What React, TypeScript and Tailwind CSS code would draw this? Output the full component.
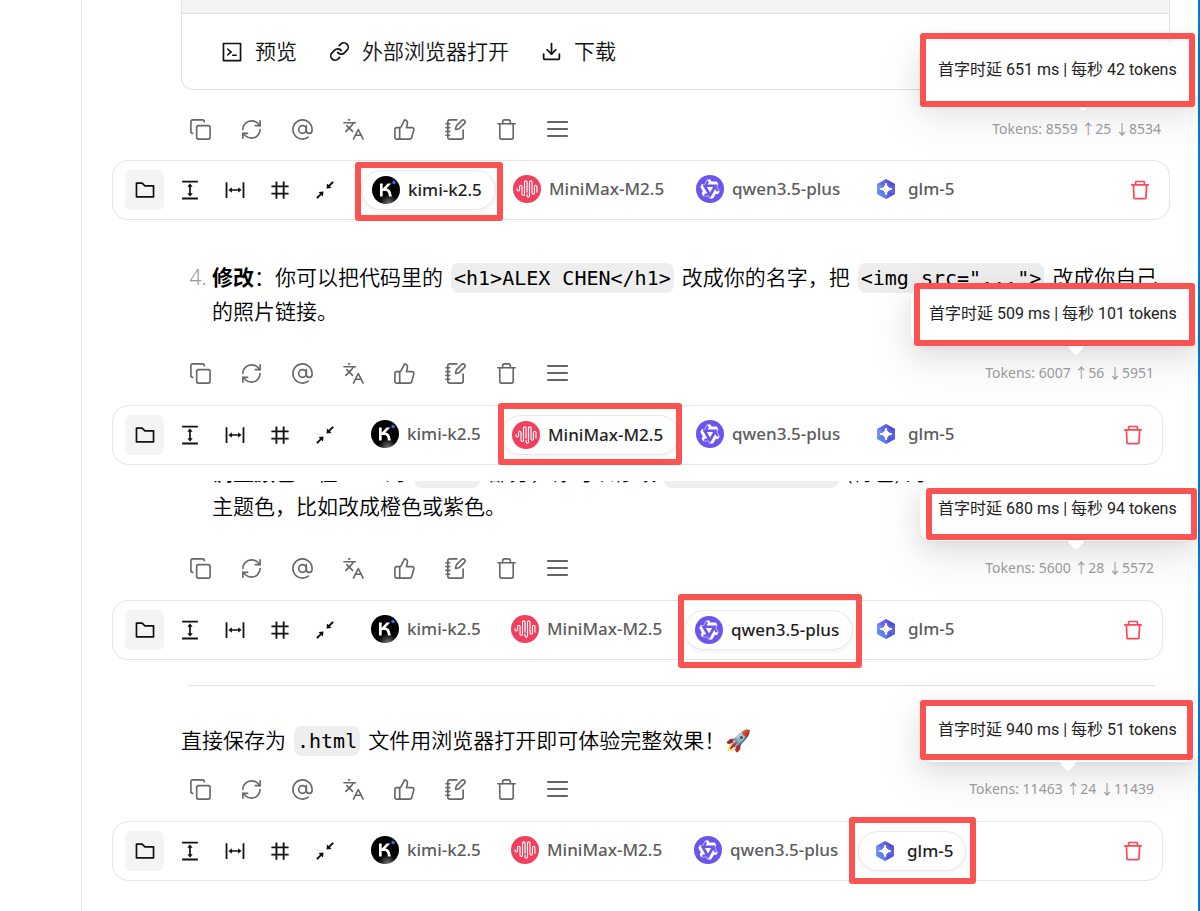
import type { ReactNode } from "react";
import { AtSign, Copy, Download, Languages, Link, NotebookPen, RefreshCw, ThumbsUp, Trash } from "lucide-react";
import {
  AiOutlineCode,
  AiOutlineColumnHeight,
  AiOutlineColumnWidth,
  AiOutlineDelete,
  AiOutlineFolder,
  AiOutlineNumber,
  AiOutlineShrink,
} from "react-icons/ai";

type ModelId = "kimi" | "minimax" | "qwen" | "glm";

function KimiLogo() {
  return (
    <svg viewBox="0 0 28 28" className="size-7 shrink-0" aria-hidden="true">
      <defs>
        <radialGradient id="kimi-glow" cx="0.6" cy="1" r="0.35">
          <stop offset="0" stopColor="#777" />
          <stop offset="1" stopColor="#000" />
        </radialGradient>
      </defs>
      <circle cx="14" cy="14" r="14" fill="url(#kimi-glow)" />
      <path d="M8 7.5h2.7v5.3l4.8-5.3h3.7l-4.7 5c3.1.5 4.500 2.200 5.300 8h-2.800c-.5-4.300-1.500-5.600-3.700-5.600h-2.600v5.600H8z" fill="#fff" />
      <circle cx="22" cy="6.5" r="1.7" fill="#1e78ff" />
    </svg>
  );
}

function MiniMaxLogo() {
  return (
    <svg viewBox="0 0 28 28" className="size-7 shrink-0" aria-hidden="true">
      <circle cx="14" cy="14" r="14" fill="#f23f5d" />
      <g transform="translate(3.5 3.5) scale(0.875)" fill="#fff">
        <path d="M16.278 2c1.156 0 2.093.927 2.093 2.07v12.501a.74.74 0 00.744.709.74.74 0 00.743-.709V9.099a2.06 2.06 0 012.071-2.049A2.06 2.06 0 0124 9.1v6.561a.649.649 0 01-.652.645.649.649 0 01-.653-.645V9.1a.762.762 0 00-.766-.758.762.762 0 00-.766.758v7.472a2.037 2.037 0 01-2.048 2.026 2.037 2.037 0 01-2.048-2.026v-12.5a.785.785 0 00-.788-.753.785.785 0 00-.789.752l-.001 15.904A2.037 2.037 0 0113.441 22a2.037 2.037 0 01-2.048-2.026V18.04c0-.356.292-.645.652-.645.36 0 .652.289.652.645v1.934c0 .263.142.506.372.638.23.131.514.131.744 0a.734.734 0 00.372-.638V4.07c0-1.143.937-2.07 2.093-2.07zm-5.674 0c1.156 0 2.093.927 2.093 2.07v11.523a.648.648 0 01-.652.645.648.648 0 01-.652-.645V4.07a.785.785 0 00-.789-.78.785.785 0 00-.789.78v14.013a2.06 2.06 0 01-2.07 2.048 2.06 2.06 0 01-2.071-2.048V9.1a.762.762 0 00-.766-.758.762.762 0 00-.766.758v3.8a2.06 2.06 0 01-2.071 2.049A2.06 2.06 0 010 12.9v-1.378c0-.357.292-.646.652-.646.36 0 .653.29.653.646V12.9c0 .418.343.757.766.757s.766-.339.766-.757V9.099a2.06 2.06 0 012.07-2.048 2.06 2.06 0 012.071 2.048v8.984c0 .419.343.758.767.758.423 0 .766-.339.766-.758V4.07c0-1.143.937-2.07 2.093-2.07z" />
      </g>
    </svg>
  );
}

function QwenLogo() {
  return (
    <svg viewBox="0 0 28 28" className="size-7 shrink-0" aria-hidden="true">
      <circle cx="14" cy="14" r="14" fill="#6d54ee" />
      <g transform="translate(3.5 3.5) scale(0.875)" fill="#fff">
        <path d="M12.604 1.34c.393.69.784 1.382 1.174 2.075a.18.18 0 00.157.091h5.552c.174 0 .322.11.446.327l1.454 2.57c.19.337.24.478.024.837-.26.43-.513.864-.76 1.3l-.367.658c-.106.196-.223.28-.04.512l2.652 4.637c.172.301.111.494-.043.77-.437.785-.882 1.564-1.335 2.34-.159.272-.352.375-.68.37-.777-.016-1.552-.01-2.327.016a.099.099 0 00-.081.05 575.097 575.097 0 01-2.705 4.74c-.169.293-.38.363-.725.364-.997.003-2.002.004-3.017.002a.537.537 0 01-.465-.271l-1.335-2.323a.09.09 0 00-.083-.049H4.982c-.285.03-.553-.001-.805-.092l-1.603-2.77a.543.543 0 01-.002-.54l1.207-2.12a.198.198 0 000-.197 550.951 550.951 0 01-1.875-3.272l-.79-1.395c-.16-.31-.173-.496.095-.965.465-.813.927-1.625 1.387-2.436.132-.234.304-.334.584-.335a338.3 338.3 0 012.589-.001.124.124 0 00.107-.063l2.806-4.895a.488.488 0 01.422-.246c.524-.001 1.053 0 1.583-.006L11.704 1c.341-.003.724.032.9.34zm-3.432.403a.06.06 0 00-.052.03L6.254 6.788a.157.157 0 01-.135.078H3.253c-.056 0-.07.025-.041.074l5.81 10.156c.025.042.013.062-.034.063l-2.795.015a.218.218 0 00-.2.116l-1.32 2.31c-.044.078-.021.118.068.118l5.716.008c.046 0 .08.02.104.061l1.403 2.454c.046.081.092.082.139 0l5.006-8.76.783-1.382a.055.055 0 01.096 0l1.424 2.53a.122.122 0 00.107.062l2.763-.02a.04.04 0 00.035-.02.041.041 0 000-.04l-2.9-5.086a.108.108 0 010-.113l.293-.507 1.12-1.977c.024-.041.012-.062-.035-.062H9.2c-.059 0-.073-.026-.043-.077l1.434-2.505a.107.107 0 000-.114L9.225 1.774a.06.06 0 00-.053-.031zm6.29 8.02c.046 0 .058.02.034.06l-.832 1.465-2.613 4.585a.056.056 0 01-.05.029.058.058 0 01-.05-.029L8.498 9.841c-.02-.034-.01-.052.028-.054l.216-.012 6.722-.012z" />
      </g>
    </svg>
  );
}

function GlmLogo() {
  return (
    <svg viewBox="0 0 30 28" className="h-7 w-[30px] shrink-0" aria-hidden="true">
      <defs>
        <linearGradient id="glm-fill" x1="0" y1="0.9" x2="1" y2="0.2">
          <stop offset="0" stopColor="#4d9df5" />
          <stop offset="0.5" stopColor="#6a6cf0" />
          <stop offset="1" stopColor="#5650dc" />
        </linearGradient>
      </defs>
      <path d="M16 4l9 5v10l-9 5-9-5V9z" fill="url(#glm-fill)" />
      <path d="M16 4l9 5-4 2z" fill="#3d3fd0" opacity="0.5" />
      <path d="M7 9l5 2-5 8z" fill="#a8a6ff" opacity="0.35" />
      <path d="M16 24l9-5-6-2z" fill="#3d49dd" opacity="0.6" />
      <path d="M16 8Q16.8 13.2 22 14 16.8 14.8 16 20 15.2 14.8 10 14 15.2 13.2 16 8z" fill="#fff" stroke="#fff" />
    </svg>
  );
}

function MenuLines() {
  return (
    <svg viewBox="0 0 24 24" className="size-6" fill="none" stroke="currentColor" strokeWidth="2.2" strokeLinecap="round" aria-hidden="true">
      <path d="M2 5h19M2 12h19M2 19h19" />
    </svg>
  );
}

const MODELS: { id: ModelId; name: string; width: string; logo: ReactNode }[] = [
  { id: "kimi", name: "kimi-k2.5", width: "min-w-[113px]", logo: <KimiLogo /> },
  { id: "minimax", name: "MiniMax-M2.5", width: "min-w-[156px]", logo: <MiniMaxLogo /> },
  { id: "qwen", name: "qwen3.5-plus", width: "min-w-[147px]", logo: <QwenLogo /> },
  { id: "glm", name: "glm-5", width: "min-w-[86px]", logo: <GlmLogo /> },
];

/** Red annotation frame drawn over its positioned parent. */
function Frame({ inset }: { inset: string }) {
  return <span aria-hidden="true" className={`pointer-events-none absolute z-20 rounded-[3px] border-6 border-[#fb5252] ${inset}`} />;
}

function IconButton({ label, children }: { label: string; children: ReactNode }) {
  return (
    <button type="button" aria-label={label} className="flex h-[30px] w-[39px] items-center justify-center text-[#666]">
      {children}
    </button>
  );
}

function BarButton({ label, active = false, children }: { label: string; active?: boolean; children: ReactNode }) {
  return (
    <button
      type="button"
      aria-label={label}
      className={`flex h-10 w-[39px] items-center justify-center rounded-md text-2xl text-[#111] ${active ? "bg-[#f4f4f4]" : ""}`}
    >
      {children}
    </button>
  );
}

type ActionRowProps = {
  tokens: string;
  latency: string;
  tooltipBox: string;
  frame: string;
};

function ActionRow({ tokens, latency, tooltipBox, frame }: ActionRowProps) {
  return (
    <div className="relative flex items-center justify-between pl-[69px] pr-[9px]">
      <div className="flex gap-3">
        <IconButton label="复制"><Copy size={23} strokeWidth={1.7} /></IconButton>
        <IconButton label="重新生成"><RefreshCw size={23} strokeWidth={1.7} /></IconButton>
        <IconButton label="提及模型"><AtSign size={23} strokeWidth={1.7} /></IconButton>
        <IconButton label="翻译"><Languages size={23} strokeWidth={1.7} /></IconButton>
        <IconButton label="点赞"><ThumbsUp size={23} strokeWidth={1.7} /></IconButton>
        <IconButton label="保存笔记"><NotebookPen size={23} strokeWidth={1.7} /></IconButton>
        <IconButton label="删除"><Trash size={23} strokeWidth={1.7} /></IconButton>
        <IconButton label="更多"><MenuLines /></IconButton>
      </div>
      <div className={`absolute bottom-[42px] flex h-15 items-center rounded-xl bg-white pb-1 pl-[18px] pr-2 font-['Roboto','Noto_Sans_CJK_SC',sans-serif] text-base whitespace-nowrap text-[#222] shadow-[0_9px_24px_rgba(0,0,0,0.08),0_4px_9px_-6px_rgba(0,0,0,0.12),0_14px_42px_12px_rgba(0,0,0,0.05)] ${tooltipBox}`}>
        {latency}
        <Frame inset={frame} />
      </div>
      <span className="relative flex h-7 items-center text-sm whitespace-nowrap text-[#999]">
        <span aria-hidden="true" className="absolute -top-[18px] left-1/2 size-3 rotate-45 rounded-[2px] bg-white" />
        <span className="relative">{tokens}</span>
      </span>
    </div>
  );
}

function ModelBar({ active, frame }: { active: ModelId; frame: string }) {
  return (
    <div className="flex h-[60px] items-start justify-between rounded-2xl border border-[#e5e5e5] pt-[9px] pr-[10px] pl-3">
      <div className="flex items-start">
        <div className="flex gap-[6px]">
          <BarButton label="展开" active><AiOutlineFolder /></BarButton>
          <BarButton label="纵向布局"><AiOutlineColumnHeight /></BarButton>
          <BarButton label="横向布局"><AiOutlineColumnWidth /></BarButton>
          <BarButton label="网格布局"><AiOutlineNumber /></BarButton>
          <BarButton label="收起"><AiOutlineShrink /></BarButton>
        </div>
        <div className="ml-[17px] flex items-start gap-[7px]" role="tablist">
          {MODELS.map((model) => {
            const selected = model.id === active;
            return (
              <button
                key={model.id}
                type="button"
                role="tab"
                aria-selected={selected}
                className={`relative box-content flex h-[38px] items-center gap-2 rounded-full px-[10px] text-[17px] font-medium whitespace-nowrap ${model.width} ${
                  selected
                    ? "border border-[#e8e8e8] bg-white text-[#1f1f1f] shadow-[0_2px_4px_rgba(0,0,0,0.05)]"
                    : "text-[#5c5c5c]"
                }`}
              >
                {model.logo}
                {model.name}
                {selected && <Frame inset={frame} />}
              </button>
            );
          })}
        </div>
      </div>
      <button type="button" aria-label="删除分组" className="flex h-10 w-[39px] items-center justify-center text-2xl text-[#ff4757]">
        <AiOutlineDelete />
      </button>
    </div>
  );
}

function Code({ children }: { children: ReactNode }) {
  return (
    <code className="mx-2 rounded-lg bg-[#eee] px-[3px] py-[3px] font-['DejaVu_Sans_Mono','Noto_Sans_CJK_SC',monospace] text-xl leading-none">
      {children}
    </code>
  );
}

export default function App() {
  return (
    <div className="flex min-h-screen overflow-hidden bg-white font-['Noto_Sans','Noto_Sans_CJK_SC',sans-serif] text-black">
      <aside className="w-[82px] shrink-0 border-r border-[#e5e5e5]" />
      <main className="min-w-0 flex-1 pb-[30px] pl-[30px]">
        <section className="pr-7">
          <div className="ml-[69px] overflow-hidden rounded-b-xl border border-t-0 border-[#e2e2e2]">
            <div className="h-[14px] border-b border-[#dcdcdc] bg-[#f4f4f4]" />
            <div className="flex h-[75px] items-center gap-8 pl-[38px] text-[21px] font-[350] text-[#111]">
              <button type="button" className="flex items-center gap-[11px]">
                <AiOutlineCode className="size-6" />预览
              </button>
              <button type="button" className="flex items-center gap-3">
                <Link size={21} strokeWidth={2} />外部浏览器打开
              </button>
              <button type="button" className="flex items-center gap-3">
                <Download size={21} strokeWidth={2} />下载
              </button>
            </div>
          </div>
          <div className="mt-6 flex flex-col gap-4">
            <ActionRow tokens="Tokens: 8559 ↑25 ↓8534" latency="首字时延 651 ms | 每秒 42 tokens" tooltipBox="-right-7 min-w-[278px]" frame="-top-[9px] right-[3px] -bottom-[5px] left-0" />
            <ModelBar active="kimi" frame="-top-[9px] -right-2 -bottom-3 -left-[7px]" />
          </div>
        </section>

        <section className="mt-[10px] pt-[30px] pr-[35px] pb-4">
          <ol start={4} className="-mr-[7px] list-decimal pl-[100px] text-[21px] leading-[34px] font-[350] marker:text-[#999]">
            <li>
              <strong className="font-bold">修改</strong>：你可以把代码里的
              <Code>{"<h1>ALEX CHEN</h1>"}</Code>改成你的名字，把
              <Code>{'<img src="...">'}</Code>改成你自己的照片链接。
            </li>
          </ol>
          <div className="mt-[30px] flex flex-col gap-[17px]">
            <ActionRow tokens="Tokens: 6007 ↑56 ↓5951" latency="首字时延 509 ms | 每秒 101 tokens" tooltipBox="-right-[35px] min-w-[287px]" frame="-top-[3px] right-[3px] bottom-0 left-[3px]" />
            <ModelBar active="minimax" frame="-top-[13px] -right-1 -bottom-[11px] -left-1" />
          </div>
        </section>

        <section className="-mr-px overflow-hidden pr-9 pb-2">
          <div className="flex h-[42px] flex-col justify-end overflow-hidden pl-[100px] text-[21px] leading-[34px] font-[350]">
            <p className="shrink-0">
              <strong className="font-bold">调整颜色</strong>：在 CSS 的<Code>:root</Code>部分，你可以修改
              <Code>--accent-color</Code>(青色) 为
              <br />
              主题色，比如改成橙色或紫色。
            </p>
          </div>
          <div className="mt-[30px] flex flex-col gap-[17px]">
            <ActionRow tokens="Tokens: 5600 ↑28 ↓5572" latency="首字时延 680 ms | 每秒 94 tokens" tooltipBox="-right-[35px] min-w-[278px]" frame="top-[7px] right-px bottom-px left-[6px]" />
            <ModelBar active="qwen" frame="-top-[17px] -right-[10px] -bottom-[19px] -left-[7px]" />
          </div>
        </section>

        <section className="pt-[17px] pr-[35px]">
          <hr className="mr-2 ml-[76px] border-[#e2e2e2]" />
          <p className="mt-[37px] pl-[69px] text-[21px] leading-[34px] font-[350]">
            直接保存为<Code>.html</Code>文件用浏览器打开即可体验完整效果！🚀
          </p>
          <div className="mt-[17px] flex flex-col gap-[17px]">
            <ActionRow tokens="Tokens: 11463 ↑24 ↓11439" latency="首字时延 940 ms | 每秒 51 tokens" tooltipBox="-right-[35px] min-w-[278px]" frame="-top-[2px] right-[5px] bottom-[2px] left-0" />
            <ModelBar active="glm" frame="-top-[15px] -right-[11px] -bottom-[14px] -left-[10px]" />
          </div>
        </section>
      </main>
      <div className="w-[2px] shrink-0 bg-[#0078d4]" />
    </div>
  );
}
